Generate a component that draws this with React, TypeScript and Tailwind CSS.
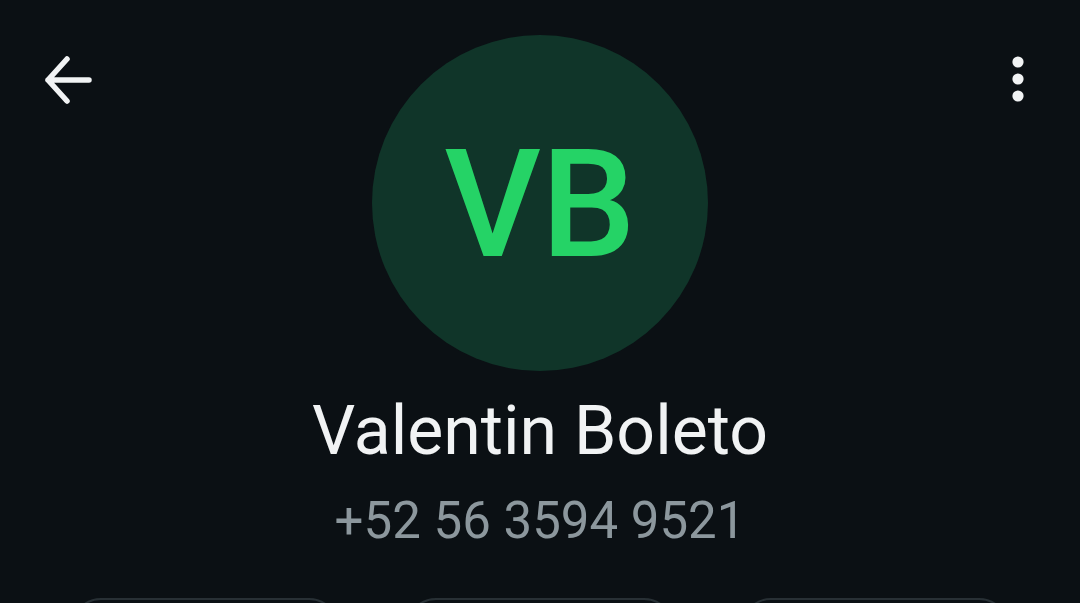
import React from "react";

function BackArrow() {
  return (
    <svg width="50" height="50" viewBox="0 0 50 50" fill="none">
      <path
        d="M5 25H46M5 25L24 4M5 25L24 46"
        stroke="#f1f3f4"
        strokeWidth="5.5"
        strokeLinecap="round"
        strokeLinejoin="round"
      />
    </svg>
  );
}

function Kebab() {
  return (
    <svg width="20" height="50" viewBox="0 0 20 50" fill="#f1f3f4">
      <circle cx="10" cy="7" r="5.6" />
      <circle cx="10" cy="24" r="5.6" />
      <circle cx="10" cy="41" r="5.6" />
    </svg>
  );
}

export default function App() {
  const actions = ["call", "video", "search"];

  return (
    <div className="h-[603px] overflow-hidden bg-[#0b1014] font-['Roboto',sans-serif]">
      <div className="grid grid-cols-[1fr_336px_1fr] items-start">
        <button className="justify-self-start ml-[43px] mt-[55px]">
          <BackArrow />
        </button>
        <div className="mt-[35px] w-[336px] h-[336px] rounded-full bg-[#103529] flex items-center justify-center pt-[4px]">
          <span className="text-[150px] leading-none font-medium text-[#25d366]">
            VB
          </span>
        </div>
        <button className="justify-self-end mr-[52px] mt-[55px]">
          <Kebab />
        </button>
      </div>

      <div className="flex flex-col items-center">
        <h1 className="mt-[26px] text-[68px] leading-[68px] text-[#f1f3f4]">
          Valentin Boleto
        </h1>
        <p className="mt-[30px] text-[51px] leading-[51px] text-[#8c979d]">
          +52 56 3594 9521
        </p>
        <div className="mt-[52px] flex gap-[67px]">
          {actions.map((a) => (
            <div
              key={a}
              className="w-[268px] h-[100px] rounded-[30px] border-2 border-[#283035]"
            />
          ))}
        </div>
      </div>
    </div>
  );
}
